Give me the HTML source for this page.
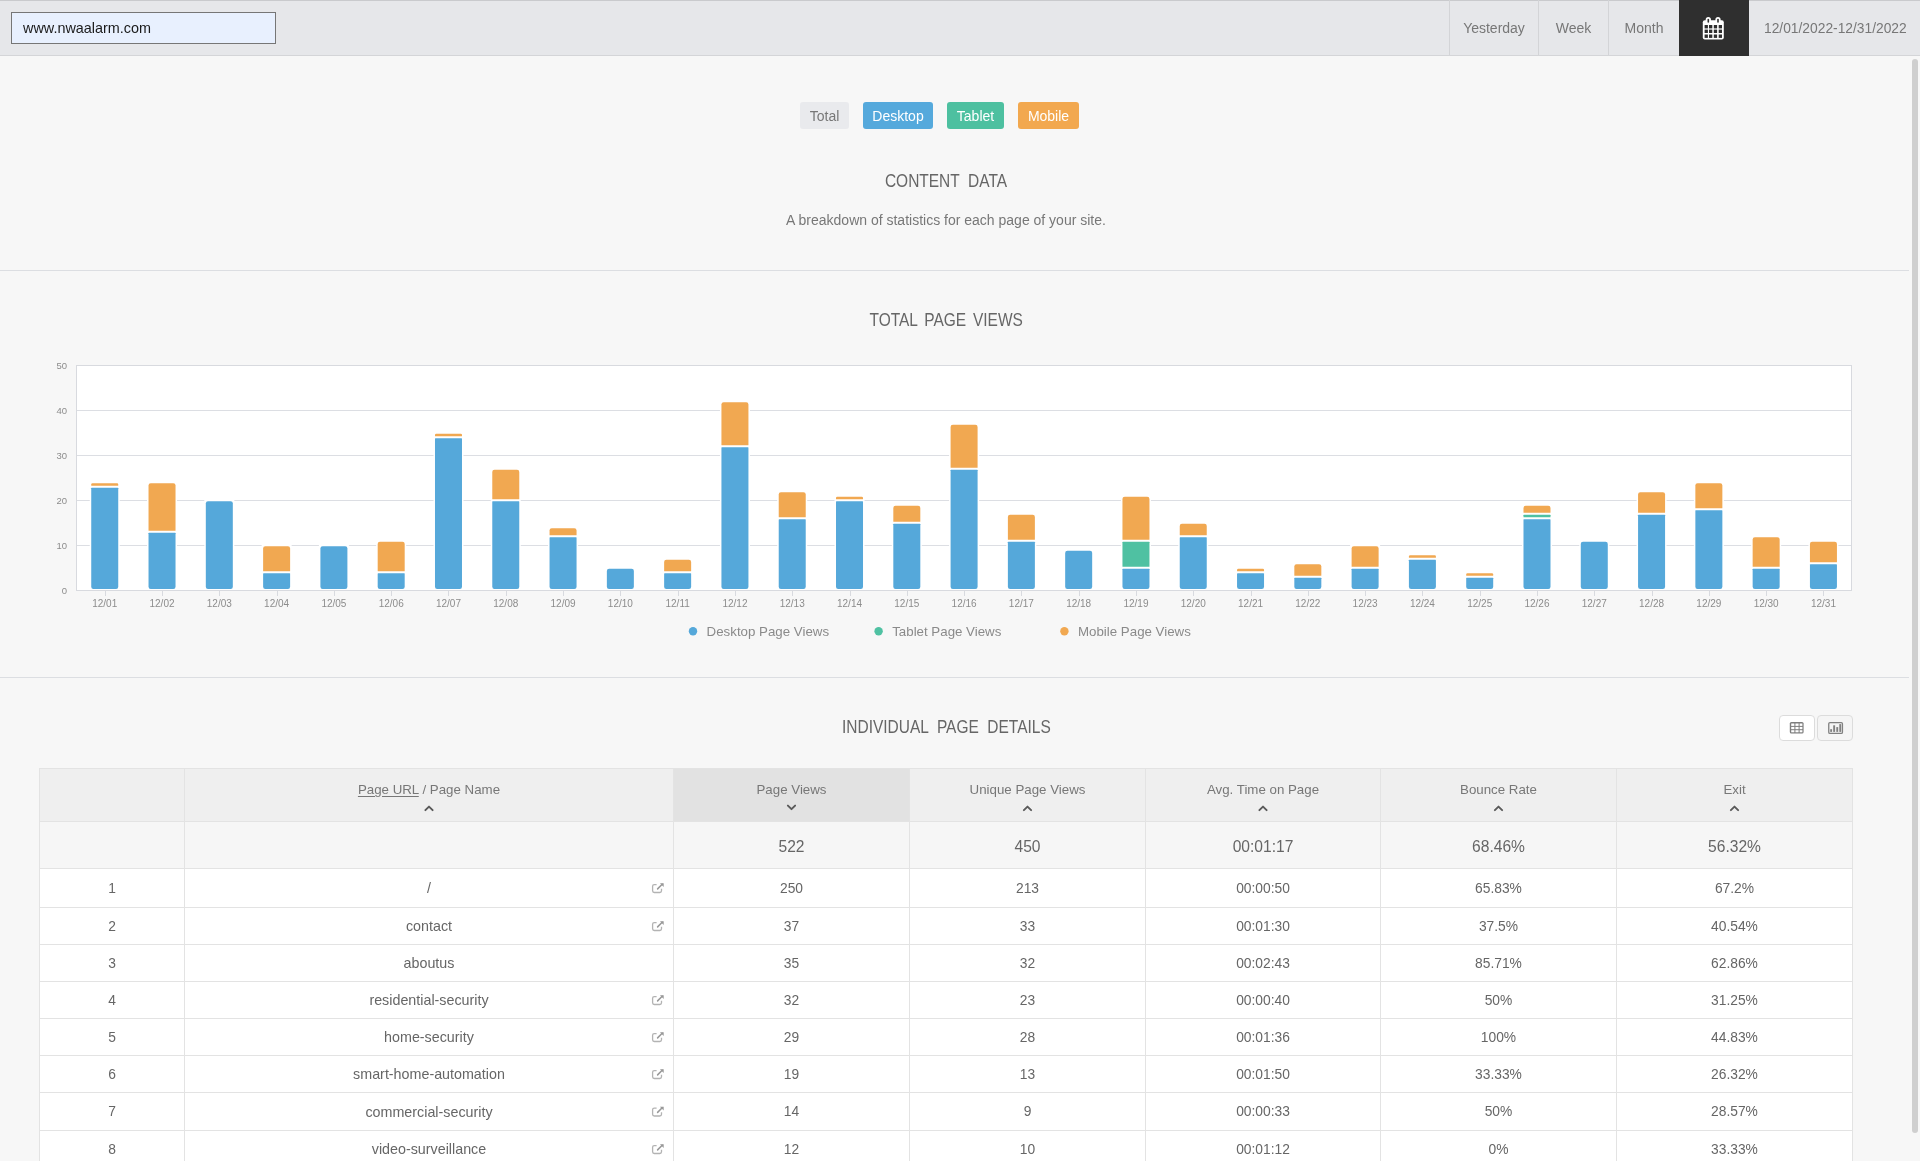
<!DOCTYPE html>
<html><head><meta charset="utf-8">
<style>
*{box-sizing:border-box;margin:0;padding:0}
html,body{width:1920px;height:1161px;overflow:hidden}
body{background:#f7f7f7;font-family:"Liberation Sans",sans-serif;color:#777;position:relative}
.abs{position:absolute;will-change:transform}
svg text{font-family:"Liberation Sans",sans-serif}
#hdr{left:0;top:0;width:1920px;height:56px;background:#e6e7ea;border-top:1px solid #c9cacd;border-bottom:1px solid #d4d5d8}
#url{left:11px;top:12px;width:265px;height:32px;border:1px solid #767676;background:#e8f0fe;color:#1a1a1a;font-size:14.4px;line-height:31px;padding-left:11px}
.nav{top:1px;height:55px;line-height:55px;font-size:14px;color:#777;text-align:center}
.sep{top:0;width:1px;height:55px;background:#d3d4d7}
#cal{left:1679px;top:0;width:70px;height:56px;background:#2f2f2f}
.btn{top:102px;height:27px;border-radius:3px;font-size:14px;line-height:29px;text-align:center;color:#fff}
.h2{left:0;width:1892px;text-align:center;font-size:18px;line-height:20px;color:#666}
.h2 span{display:inline-block;transform:scaleX(0.86);word-spacing:5px}
.hr{left:0;width:1909px;height:1px;background:#dcdee2}
#scroll{left:1912px;top:59px;width:6px;height:1074px;border-radius:3px;background:#cfcfcf}
.th{top:780px;height:20px;line-height:20px;text-align:center;font-size:13.3px;color:#777}
.th u{text-decoration:underline;text-underline-offset:2px}
.tt{top:824px;height:46px;line-height:46px;text-align:center;font-size:15.6px;color:#666}
.td{text-align:center;font-size:13.8px;color:#666}
.iconbtn{top:715px;width:36px;height:26px;border:1px solid #dcdcdc;border-radius:4px}
</style></head><body>
<div id="hdr" class="abs"></div>
<div id="url" class="abs">www.nwaalarm.com</div>
<div class="abs sep" style="left:1449px"></div>
<div class="abs sep" style="left:1538px"></div>
<div class="abs sep" style="left:1608px"></div>
<div class="abs nav" style="left:1450px;width:88px">Yesterday</div>
<div class="abs nav" style="left:1539px;width:69px">Week</div>
<div class="abs nav" style="left:1609px;width:70px">Month</div>
<div id="cal" class="abs"></div>
<svg class="abs" style="left:1679px;top:0" width="70" height="56" viewBox="1679 0 70 56">
<rect x="1702.8" y="20.3" width="21" height="19.3" rx="2" fill="#fff"/>
<rect x="1705.7" y="17" width="5.2" height="6.5" rx="2.6" fill="#fff"/>
<rect x="1707.5" y="18.8" width="1.6" height="4" rx="0.8" fill="#2f2f2f"/>
<rect x="1715.4" y="17" width="5.2" height="6.5" rx="2.6" fill="#fff"/>
<rect x="1717.2" y="18.8" width="1.6" height="4" rx="0.8" fill="#2f2f2f"/>
<rect x="1704.6" y="25.0" width="3.3" height="3.4" fill="#2f2f2f"/>
<rect x="1704.6" y="29.6" width="3.3" height="3.4" fill="#2f2f2f"/>
<rect x="1704.6" y="34.5" width="3.3" height="3.4" fill="#2f2f2f"/>
<rect x="1709.0" y="25.0" width="3.3" height="3.4" fill="#2f2f2f"/>
<rect x="1709.0" y="29.6" width="3.3" height="3.4" fill="#2f2f2f"/>
<rect x="1709.0" y="34.5" width="3.3" height="3.4" fill="#2f2f2f"/>
<rect x="1713.8" y="25.0" width="3.3" height="3.4" fill="#2f2f2f"/>
<rect x="1713.8" y="29.6" width="3.3" height="3.4" fill="#2f2f2f"/>
<rect x="1713.8" y="34.5" width="3.3" height="3.4" fill="#2f2f2f"/>
<rect x="1718.7" y="25.0" width="3.3" height="3.4" fill="#2f2f2f"/>
<rect x="1718.7" y="29.6" width="3.3" height="3.4" fill="#2f2f2f"/>
<rect x="1718.7" y="34.5" width="3.3" height="3.4" fill="#2f2f2f"/>
</svg>
<div class="abs nav" style="left:1764px;width:160px;text-align:left;font-size:13.8px">12/01/2022-12/31/2022</div>

<div class="abs btn" style="left:800px;width:49px;background:#e9eaed;color:#777">Total</div>
<div class="abs btn" style="left:863px;width:70px;background:#55a9dc">Desktop</div>
<div class="abs btn" style="left:947px;width:57px;background:#4dc0a0">Tablet</div>
<div class="abs btn" style="left:1018px;width:61px;background:#f2a84f">Mobile</div>

<div class="abs h2" style="top:171px"><span>CONTENT DATA</span></div>
<div class="abs" style="left:0;width:1892px;top:212px;text-align:center;font-size:14px;color:#777">A breakdown of statistics for each page of your site.</div>
<div class="abs hr" style="top:270px"></div>
<div class="abs h2" style="top:310px"><span style="word-spacing:3px">TOTAL PAGE VIEWS</span></div>
<svg class="abs" style="left:0;top:340px;will-change:transform" width="1908" height="320" viewBox="0 340 1908 320">
<rect x="76.5" y="365.5" width="1775" height="225" fill="#fff" stroke="#d8dadf" stroke-width="1"/>
<line x1="77" x2="1851" y1="545.5" y2="545.5" stroke="#dcdee3" stroke-width="1"/>
<line x1="77" x2="1851" y1="500.5" y2="500.5" stroke="#dcdee3" stroke-width="1"/>
<line x1="77" x2="1851" y1="455.5" y2="455.5" stroke="#dcdee3" stroke-width="1"/>
<line x1="77" x2="1851" y1="410.5" y2="410.5" stroke="#dcdee3" stroke-width="1"/>
<text x="67" y="593.8" text-anchor="end" font-size="9.5" fill="#8c8c8c">0</text>
<text x="67" y="548.8" text-anchor="end" font-size="9.5" fill="#8c8c8c">10</text>
<text x="67" y="503.8" text-anchor="end" font-size="9.5" fill="#8c8c8c">20</text>
<text x="67" y="458.8" text-anchor="end" font-size="9.5" fill="#8c8c8c">30</text>
<text x="67" y="413.8" text-anchor="end" font-size="9.5" fill="#8c8c8c">40</text>
<text x="67" y="368.8" text-anchor="end" font-size="9.5" fill="#8c8c8c">50</text>
<rect x="89.74" y="481.80" width="30" height="107.70" fill="#fff"/>
<path d="M91.64 487.80 H117.84 Q118.24 487.80 118.24 488.20 V586.80 Q118.24 589.00 116.04 589.00 H93.44 Q91.24 589.00 91.24 586.80 V488.20 Q91.24 487.80 91.64 487.80 Z" fill="#55a8da"/>
<path d="M92.49 483.30 H116.99 Q118.24 483.30 118.24 484.55 V485.40 Q118.24 485.80 117.84 485.80 H91.64 Q91.24 485.80 91.24 485.40 V484.55 Q91.24 483.30 92.49 483.30 Z" fill="#f1a851"/>
<line x1="105.5" x2="105.5" y1="591" y2="596" stroke="#d8dadf" stroke-width="1"/>
<text x="104.74" y="607.0" text-anchor="middle" font-size="10" fill="#8c8c8c">12/01</text>
<rect x="147.03" y="481.80" width="30" height="107.70" fill="#fff"/>
<path d="M148.94 532.80 H175.13 Q175.53 532.80 175.53 533.20 V586.80 Q175.53 589.00 173.34 589.00 H150.73 Q148.53 589.00 148.53 586.80 V533.20 Q148.53 532.80 148.94 532.80 Z" fill="#55a8da"/>
<path d="M150.73 483.30 H173.34 Q175.53 483.30 175.53 485.50 V530.40 Q175.53 530.80 175.13 530.80 H148.94 Q148.53 530.80 148.53 530.40 V485.50 Q148.53 483.30 150.73 483.30 Z" fill="#f1a851"/>
<line x1="162.5" x2="162.5" y1="591" y2="596" stroke="#d8dadf" stroke-width="1"/>
<text x="162.03" y="607.0" text-anchor="middle" font-size="10" fill="#8c8c8c">12/02</text>
<rect x="204.32" y="499.80" width="30" height="89.70" fill="#fff"/>
<path d="M208.02 501.30 H230.62 Q232.82 501.30 232.82 503.50 V586.80 Q232.82 589.00 230.62 589.00 H208.02 Q205.82 589.00 205.82 586.80 V503.50 Q205.82 501.30 208.02 501.30 Z" fill="#55a8da"/>
<line x1="219.5" x2="219.5" y1="591" y2="596" stroke="#d8dadf" stroke-width="1"/>
<text x="219.32" y="607.0" text-anchor="middle" font-size="10" fill="#8c8c8c">12/03</text>
<rect x="261.62" y="544.80" width="30" height="44.70" fill="#fff"/>
<path d="M263.51 573.30 H289.72 Q290.12 573.30 290.12 573.70 V586.80 Q290.12 589.00 287.92 589.00 H265.31 Q263.12 589.00 263.12 586.80 V573.70 Q263.12 573.30 263.51 573.30 Z" fill="#55a8da"/>
<path d="M265.31 546.30 H287.92 Q290.12 546.30 290.12 548.50 V570.90 Q290.12 571.30 289.72 571.30 H263.51 Q263.12 571.30 263.12 570.90 V548.50 Q263.12 546.30 265.31 546.30 Z" fill="#f1a851"/>
<line x1="277.5" x2="277.5" y1="591" y2="596" stroke="#d8dadf" stroke-width="1"/>
<text x="276.62" y="607.0" text-anchor="middle" font-size="10" fill="#8c8c8c">12/04</text>
<rect x="318.90" y="544.80" width="30" height="44.70" fill="#fff"/>
<path d="M322.60 546.30 H345.20 Q347.40 546.30 347.40 548.50 V586.80 Q347.40 589.00 345.20 589.00 H322.60 Q320.40 589.00 320.40 586.80 V548.50 Q320.40 546.30 322.60 546.30 Z" fill="#55a8da"/>
<line x1="334.5" x2="334.5" y1="591" y2="596" stroke="#d8dadf" stroke-width="1"/>
<text x="333.90" y="607.0" text-anchor="middle" font-size="10" fill="#8c8c8c">12/05</text>
<rect x="376.19" y="540.30" width="30" height="49.20" fill="#fff"/>
<path d="M378.09 573.30 H404.29 Q404.69 573.30 404.69 573.70 V586.80 Q404.69 589.00 402.49 589.00 H379.89 Q377.69 589.00 377.69 586.80 V573.70 Q377.69 573.30 378.09 573.30 Z" fill="#55a8da"/>
<path d="M379.89 541.80 H402.49 Q404.69 541.80 404.69 544.00 V570.90 Q404.69 571.30 404.29 571.30 H378.09 Q377.69 571.30 377.69 570.90 V544.00 Q377.69 541.80 379.89 541.80 Z" fill="#f1a851"/>
<line x1="391.5" x2="391.5" y1="591" y2="596" stroke="#d8dadf" stroke-width="1"/>
<text x="391.19" y="607.0" text-anchor="middle" font-size="10" fill="#8c8c8c">12/06</text>
<rect x="433.49" y="432.30" width="30" height="157.20" fill="#fff"/>
<path d="M435.38 438.30 H461.59 Q461.99 438.30 461.99 438.70 V586.80 Q461.99 589.00 459.79 589.00 H437.19 Q434.99 589.00 434.99 586.80 V438.70 Q434.99 438.30 435.38 438.30 Z" fill="#55a8da"/>
<path d="M436.24 433.80 H460.74 Q461.99 433.80 461.99 435.05 V435.90 Q461.99 436.30 461.59 436.30 H435.38 Q434.99 436.30 434.99 435.90 V435.05 Q434.99 433.80 436.24 433.80 Z" fill="#f1a851"/>
<line x1="448.5" x2="448.5" y1="591" y2="596" stroke="#d8dadf" stroke-width="1"/>
<text x="448.49" y="607.0" text-anchor="middle" font-size="10" fill="#8c8c8c">12/07</text>
<rect x="490.77" y="468.30" width="30" height="121.20" fill="#fff"/>
<path d="M492.67 501.30 H518.88 Q519.27 501.30 519.27 501.70 V586.80 Q519.27 589.00 517.07 589.00 H494.47 Q492.27 589.00 492.27 586.80 V501.70 Q492.27 501.30 492.67 501.30 Z" fill="#55a8da"/>
<path d="M494.47 469.80 H517.07 Q519.27 469.80 519.27 472.00 V498.90 Q519.27 499.30 518.88 499.30 H492.67 Q492.27 499.30 492.27 498.90 V472.00 Q492.27 469.80 494.47 469.80 Z" fill="#f1a851"/>
<line x1="506.5" x2="506.5" y1="591" y2="596" stroke="#d8dadf" stroke-width="1"/>
<text x="505.77" y="607.0" text-anchor="middle" font-size="10" fill="#8c8c8c">12/08</text>
<rect x="548.06" y="526.80" width="30" height="62.70" fill="#fff"/>
<path d="M549.96 537.30 H576.16 Q576.56 537.30 576.56 537.70 V586.80 Q576.56 589.00 574.36 589.00 H551.76 Q549.56 589.00 549.56 586.80 V537.70 Q549.56 537.30 549.96 537.30 Z" fill="#55a8da"/>
<path d="M551.76 528.30 H574.36 Q576.56 528.30 576.56 530.50 V534.90 Q576.56 535.30 576.16 535.30 H549.96 Q549.56 535.30 549.56 534.90 V530.50 Q549.56 528.30 551.76 528.30 Z" fill="#f1a851"/>
<line x1="563.5" x2="563.5" y1="591" y2="596" stroke="#d8dadf" stroke-width="1"/>
<text x="563.06" y="607.0" text-anchor="middle" font-size="10" fill="#8c8c8c">12/09</text>
<rect x="605.36" y="567.30" width="30" height="22.20" fill="#fff"/>
<path d="M609.06 568.80 H631.65 Q633.86 568.80 633.86 571.00 V586.80 Q633.86 589.00 631.65 589.00 H609.06 Q606.86 589.00 606.86 586.80 V571.00 Q606.86 568.80 609.06 568.80 Z" fill="#55a8da"/>
<line x1="620.5" x2="620.5" y1="591" y2="596" stroke="#d8dadf" stroke-width="1"/>
<text x="620.36" y="607.0" text-anchor="middle" font-size="10" fill="#8c8c8c">12/10</text>
<rect x="662.64" y="558.30" width="30" height="31.20" fill="#fff"/>
<path d="M664.54 573.30 H690.75 Q691.14 573.30 691.14 573.70 V586.80 Q691.14 589.00 688.94 589.00 H666.35 Q664.14 589.00 664.14 586.80 V573.70 Q664.14 573.30 664.54 573.30 Z" fill="#55a8da"/>
<path d="M666.35 559.80 H688.94 Q691.14 559.80 691.14 562.00 V570.90 Q691.14 571.30 690.75 571.30 H664.54 Q664.14 571.30 664.14 570.90 V562.00 Q664.14 559.80 666.35 559.80 Z" fill="#f1a851"/>
<line x1="678.5" x2="678.5" y1="591" y2="596" stroke="#d8dadf" stroke-width="1"/>
<text x="677.64" y="607.0" text-anchor="middle" font-size="10" fill="#8c8c8c">12/11</text>
<rect x="719.94" y="400.80" width="30" height="188.70" fill="#fff"/>
<path d="M721.84 447.30 H748.04 Q748.44 447.30 748.44 447.70 V586.80 Q748.44 589.00 746.24 589.00 H723.64 Q721.44 589.00 721.44 586.80 V447.70 Q721.44 447.30 721.84 447.30 Z" fill="#55a8da"/>
<path d="M723.64 402.30 H746.24 Q748.44 402.30 748.44 404.50 V444.90 Q748.44 445.30 748.04 445.30 H721.84 Q721.44 445.30 721.44 444.90 V404.50 Q721.44 402.30 723.64 402.30 Z" fill="#f1a851"/>
<line x1="735.5" x2="735.5" y1="591" y2="596" stroke="#d8dadf" stroke-width="1"/>
<text x="734.94" y="607.0" text-anchor="middle" font-size="10" fill="#8c8c8c">12/12</text>
<rect x="777.23" y="490.80" width="30" height="98.70" fill="#fff"/>
<path d="M779.12 519.30 H805.33 Q805.73 519.30 805.73 519.70 V586.80 Q805.73 589.00 803.52 589.00 H780.93 Q778.73 589.00 778.73 586.80 V519.70 Q778.73 519.30 779.12 519.30 Z" fill="#55a8da"/>
<path d="M780.93 492.30 H803.52 Q805.73 492.30 805.73 494.50 V516.90 Q805.73 517.30 805.33 517.30 H779.12 Q778.73 517.30 778.73 516.90 V494.50 Q778.73 492.30 780.93 492.30 Z" fill="#f1a851"/>
<line x1="792.5" x2="792.5" y1="591" y2="596" stroke="#d8dadf" stroke-width="1"/>
<text x="792.23" y="607.0" text-anchor="middle" font-size="10" fill="#8c8c8c">12/13</text>
<rect x="834.51" y="495.30" width="30" height="94.20" fill="#fff"/>
<path d="M836.41 501.30 H862.62 Q863.01 501.30 863.01 501.70 V586.80 Q863.01 589.00 860.81 589.00 H838.22 Q836.01 589.00 836.01 586.80 V501.70 Q836.01 501.30 836.41 501.30 Z" fill="#55a8da"/>
<path d="M837.26 496.80 H861.76 Q863.01 496.80 863.01 498.05 V498.90 Q863.01 499.30 862.62 499.30 H836.41 Q836.01 499.30 836.01 498.90 V498.05 Q836.01 496.80 837.26 496.80 Z" fill="#f1a851"/>
<line x1="850.5" x2="850.5" y1="591" y2="596" stroke="#d8dadf" stroke-width="1"/>
<text x="849.51" y="607.0" text-anchor="middle" font-size="10" fill="#8c8c8c">12/14</text>
<rect x="891.81" y="504.30" width="30" height="85.20" fill="#fff"/>
<path d="M893.71 523.80 H919.91 Q920.31 523.80 920.31 524.20 V586.80 Q920.31 589.00 918.11 589.00 H895.51 Q893.31 589.00 893.31 586.80 V524.20 Q893.31 523.80 893.71 523.80 Z" fill="#55a8da"/>
<path d="M895.51 505.80 H918.11 Q920.31 505.80 920.31 508.00 V521.40 Q920.31 521.80 919.91 521.80 H893.71 Q893.31 521.80 893.31 521.40 V508.00 Q893.31 505.80 895.51 505.80 Z" fill="#f1a851"/>
<line x1="907.5" x2="907.5" y1="591" y2="596" stroke="#d8dadf" stroke-width="1"/>
<text x="906.81" y="607.0" text-anchor="middle" font-size="10" fill="#8c8c8c">12/15</text>
<rect x="949.10" y="423.30" width="30" height="166.20" fill="#fff"/>
<path d="M951.00 469.80 H977.20 Q977.60 469.80 977.60 470.20 V586.80 Q977.60 589.00 975.39 589.00 H952.80 Q950.60 589.00 950.60 586.80 V470.20 Q950.60 469.80 951.00 469.80 Z" fill="#55a8da"/>
<path d="M952.80 424.80 H975.39 Q977.60 424.80 977.60 427.00 V467.40 Q977.60 467.80 977.20 467.80 H951.00 Q950.60 467.80 950.60 467.40 V427.00 Q950.60 424.80 952.80 424.80 Z" fill="#f1a851"/>
<line x1="964.5" x2="964.5" y1="591" y2="596" stroke="#d8dadf" stroke-width="1"/>
<text x="964.10" y="607.0" text-anchor="middle" font-size="10" fill="#8c8c8c">12/16</text>
<rect x="1006.38" y="513.30" width="30" height="76.20" fill="#fff"/>
<path d="M1008.28 541.80 H1034.48 Q1034.88 541.80 1034.88 542.20 V586.80 Q1034.88 589.00 1032.68 589.00 H1010.09 Q1007.88 589.00 1007.88 586.80 V542.20 Q1007.88 541.80 1008.28 541.80 Z" fill="#55a8da"/>
<path d="M1010.09 514.80 H1032.68 Q1034.88 514.80 1034.88 517.00 V539.40 Q1034.88 539.80 1034.48 539.80 H1008.28 Q1007.88 539.80 1007.88 539.40 V517.00 Q1007.88 514.80 1010.09 514.80 Z" fill="#f1a851"/>
<line x1="1021.5" x2="1021.5" y1="591" y2="596" stroke="#d8dadf" stroke-width="1"/>
<text x="1021.38" y="607.0" text-anchor="middle" font-size="10" fill="#8c8c8c">12/17</text>
<rect x="1063.67" y="549.30" width="30" height="40.20" fill="#fff"/>
<path d="M1067.38 550.80 H1089.97 Q1092.17 550.80 1092.17 553.00 V586.80 Q1092.17 589.00 1089.97 589.00 H1067.38 Q1065.17 589.00 1065.17 586.80 V553.00 Q1065.17 550.80 1067.38 550.80 Z" fill="#55a8da"/>
<line x1="1079.5" x2="1079.5" y1="591" y2="596" stroke="#d8dadf" stroke-width="1"/>
<text x="1078.67" y="607.0" text-anchor="middle" font-size="10" fill="#8c8c8c">12/18</text>
<rect x="1120.96" y="495.30" width="30" height="94.20" fill="#fff"/>
<path d="M1122.87 568.80 H1149.06 Q1149.46 568.80 1149.46 569.20 V586.80 Q1149.46 589.00 1147.26 589.00 H1124.66 Q1122.46 589.00 1122.46 586.80 V569.20 Q1122.46 568.80 1122.87 568.80 Z" fill="#55a8da"/>
<path d="M1122.87 541.80 H1149.06 Q1149.46 541.80 1149.46 542.20 V566.40 Q1149.46 566.80 1149.06 566.80 H1122.87 Q1122.46 566.80 1122.46 566.40 V542.20 Q1122.46 541.80 1122.87 541.80 Z" fill="#4fc1a2"/>
<path d="M1124.66 496.80 H1147.26 Q1149.46 496.80 1149.46 499.00 V539.40 Q1149.46 539.80 1149.06 539.80 H1122.87 Q1122.46 539.80 1122.46 539.40 V499.00 Q1122.46 496.80 1124.66 496.80 Z" fill="#f1a851"/>
<line x1="1136.5" x2="1136.5" y1="591" y2="596" stroke="#d8dadf" stroke-width="1"/>
<text x="1135.96" y="607.0" text-anchor="middle" font-size="10" fill="#8c8c8c">12/19</text>
<rect x="1178.25" y="522.30" width="30" height="67.20" fill="#fff"/>
<path d="M1180.15 537.30 H1206.35 Q1206.75 537.30 1206.75 537.70 V586.80 Q1206.75 589.00 1204.55 589.00 H1181.95 Q1179.75 589.00 1179.75 586.80 V537.70 Q1179.75 537.30 1180.15 537.30 Z" fill="#55a8da"/>
<path d="M1181.95 523.80 H1204.55 Q1206.75 523.80 1206.75 526.00 V534.90 Q1206.75 535.30 1206.35 535.30 H1180.15 Q1179.75 535.30 1179.75 534.90 V526.00 Q1179.75 523.80 1181.95 523.80 Z" fill="#f1a851"/>
<line x1="1193.5" x2="1193.5" y1="591" y2="596" stroke="#d8dadf" stroke-width="1"/>
<text x="1193.25" y="607.0" text-anchor="middle" font-size="10" fill="#8c8c8c">12/20</text>
<rect x="1235.54" y="567.30" width="30" height="22.20" fill="#fff"/>
<path d="M1237.44 573.30 H1263.64 Q1264.04 573.30 1264.04 573.70 V586.80 Q1264.04 589.00 1261.84 589.00 H1239.24 Q1237.04 589.00 1237.04 586.80 V573.70 Q1237.04 573.30 1237.44 573.30 Z" fill="#55a8da"/>
<path d="M1238.29 568.80 H1262.79 Q1264.04 568.80 1264.04 570.05 V570.90 Q1264.04 571.30 1263.64 571.30 H1237.44 Q1237.04 571.30 1237.04 570.90 V570.05 Q1237.04 568.80 1238.29 568.80 Z" fill="#f1a851"/>
<line x1="1251.5" x2="1251.5" y1="591" y2="596" stroke="#d8dadf" stroke-width="1"/>
<text x="1250.54" y="607.0" text-anchor="middle" font-size="10" fill="#8c8c8c">12/21</text>
<rect x="1292.83" y="562.80" width="30" height="26.70" fill="#fff"/>
<path d="M1294.73 577.80 H1320.93 Q1321.33 577.80 1321.33 578.20 V586.80 Q1321.33 589.00 1319.13 589.00 H1296.53 Q1294.33 589.00 1294.33 586.80 V578.20 Q1294.33 577.80 1294.73 577.80 Z" fill="#55a8da"/>
<path d="M1296.53 564.30 H1319.13 Q1321.33 564.30 1321.33 566.50 V575.40 Q1321.33 575.80 1320.93 575.80 H1294.73 Q1294.33 575.80 1294.33 575.40 V566.50 Q1294.33 564.30 1296.53 564.30 Z" fill="#f1a851"/>
<line x1="1308.5" x2="1308.5" y1="591" y2="596" stroke="#d8dadf" stroke-width="1"/>
<text x="1307.83" y="607.0" text-anchor="middle" font-size="10" fill="#8c8c8c">12/22</text>
<rect x="1350.12" y="544.80" width="30" height="44.70" fill="#fff"/>
<path d="M1352.03 568.80 H1378.22 Q1378.62 568.80 1378.62 569.20 V586.80 Q1378.62 589.00 1376.42 589.00 H1353.83 Q1351.62 589.00 1351.62 586.80 V569.20 Q1351.62 568.80 1352.03 568.80 Z" fill="#55a8da"/>
<path d="M1353.83 546.30 H1376.42 Q1378.62 546.30 1378.62 548.50 V566.40 Q1378.62 566.80 1378.22 566.80 H1352.03 Q1351.62 566.80 1351.62 566.40 V548.50 Q1351.62 546.30 1353.83 546.30 Z" fill="#f1a851"/>
<line x1="1365.5" x2="1365.5" y1="591" y2="596" stroke="#d8dadf" stroke-width="1"/>
<text x="1365.12" y="607.0" text-anchor="middle" font-size="10" fill="#8c8c8c">12/23</text>
<rect x="1407.41" y="553.80" width="30" height="35.70" fill="#fff"/>
<path d="M1409.32 559.80 H1435.51 Q1435.91 559.80 1435.91 560.20 V586.80 Q1435.91 589.00 1433.71 589.00 H1411.12 Q1408.91 589.00 1408.91 586.80 V560.20 Q1408.91 559.80 1409.32 559.80 Z" fill="#55a8da"/>
<path d="M1410.16 555.30 H1434.66 Q1435.91 555.30 1435.91 556.55 V557.40 Q1435.91 557.80 1435.51 557.80 H1409.32 Q1408.91 557.80 1408.91 557.40 V556.55 Q1408.91 555.30 1410.16 555.30 Z" fill="#f1a851"/>
<line x1="1422.5" x2="1422.5" y1="591" y2="596" stroke="#d8dadf" stroke-width="1"/>
<text x="1422.41" y="607.0" text-anchor="middle" font-size="10" fill="#8c8c8c">12/24</text>
<rect x="1464.70" y="571.80" width="30" height="17.70" fill="#fff"/>
<path d="M1466.61 577.80 H1492.80 Q1493.20 577.80 1493.20 578.20 V586.80 Q1493.20 589.00 1491.00 589.00 H1468.40 Q1466.20 589.00 1466.20 586.80 V578.20 Q1466.20 577.80 1466.61 577.80 Z" fill="#55a8da"/>
<path d="M1467.45 573.30 H1491.95 Q1493.20 573.30 1493.20 574.55 V575.40 Q1493.20 575.80 1492.80 575.80 H1466.61 Q1466.20 575.80 1466.20 575.40 V574.55 Q1466.20 573.30 1467.45 573.30 Z" fill="#f1a851"/>
<line x1="1480.5" x2="1480.5" y1="591" y2="596" stroke="#d8dadf" stroke-width="1"/>
<text x="1479.70" y="607.0" text-anchor="middle" font-size="10" fill="#8c8c8c">12/25</text>
<rect x="1521.99" y="504.30" width="30" height="85.20" fill="#fff"/>
<path d="M1523.89 519.30 H1550.09 Q1550.49 519.30 1550.49 519.70 V586.80 Q1550.49 589.00 1548.29 589.00 H1525.69 Q1523.49 589.00 1523.49 586.80 V519.70 Q1523.49 519.30 1523.89 519.30 Z" fill="#55a8da"/>
<path d="M1523.89 514.80 H1550.09 Q1550.49 514.80 1550.49 515.20 V516.90 Q1550.49 517.30 1550.09 517.30 H1523.89 Q1523.49 517.30 1523.49 516.90 V515.20 Q1523.49 514.80 1523.89 514.80 Z" fill="#4fc1a2"/>
<path d="M1525.69 505.80 H1548.29 Q1550.49 505.80 1550.49 508.00 V512.40 Q1550.49 512.80 1550.09 512.80 H1523.89 Q1523.49 512.80 1523.49 512.40 V508.00 Q1523.49 505.80 1525.69 505.80 Z" fill="#f1a851"/>
<line x1="1537.5" x2="1537.5" y1="591" y2="596" stroke="#d8dadf" stroke-width="1"/>
<text x="1536.99" y="607.0" text-anchor="middle" font-size="10" fill="#8c8c8c">12/26</text>
<rect x="1579.28" y="540.30" width="30" height="49.20" fill="#fff"/>
<path d="M1582.98 541.80 H1605.58 Q1607.78 541.80 1607.78 544.00 V586.80 Q1607.78 589.00 1605.58 589.00 H1582.98 Q1580.78 589.00 1580.78 586.80 V544.00 Q1580.78 541.80 1582.98 541.80 Z" fill="#55a8da"/>
<line x1="1594.5" x2="1594.5" y1="591" y2="596" stroke="#d8dadf" stroke-width="1"/>
<text x="1594.28" y="607.0" text-anchor="middle" font-size="10" fill="#8c8c8c">12/27</text>
<rect x="1636.57" y="490.80" width="30" height="98.70" fill="#fff"/>
<path d="M1638.47 514.80 H1664.67 Q1665.07 514.80 1665.07 515.20 V586.80 Q1665.07 589.00 1662.87 589.00 H1640.27 Q1638.07 589.00 1638.07 586.80 V515.20 Q1638.07 514.80 1638.47 514.80 Z" fill="#55a8da"/>
<path d="M1640.27 492.30 H1662.87 Q1665.07 492.30 1665.07 494.50 V512.40 Q1665.07 512.80 1664.67 512.80 H1638.47 Q1638.07 512.80 1638.07 512.40 V494.50 Q1638.07 492.30 1640.27 492.30 Z" fill="#f1a851"/>
<line x1="1652.5" x2="1652.5" y1="591" y2="596" stroke="#d8dadf" stroke-width="1"/>
<text x="1651.57" y="607.0" text-anchor="middle" font-size="10" fill="#8c8c8c">12/28</text>
<rect x="1693.86" y="481.80" width="30" height="107.70" fill="#fff"/>
<path d="M1695.76 510.30 H1721.96 Q1722.36 510.30 1722.36 510.70 V586.80 Q1722.36 589.00 1720.16 589.00 H1697.56 Q1695.36 589.00 1695.36 586.80 V510.70 Q1695.36 510.30 1695.76 510.30 Z" fill="#55a8da"/>
<path d="M1697.56 483.30 H1720.16 Q1722.36 483.30 1722.36 485.50 V507.90 Q1722.36 508.30 1721.96 508.30 H1695.76 Q1695.36 508.30 1695.36 507.90 V485.50 Q1695.36 483.30 1697.56 483.30 Z" fill="#f1a851"/>
<line x1="1709.5" x2="1709.5" y1="591" y2="596" stroke="#d8dadf" stroke-width="1"/>
<text x="1708.86" y="607.0" text-anchor="middle" font-size="10" fill="#8c8c8c">12/29</text>
<rect x="1751.15" y="535.80" width="30" height="53.70" fill="#fff"/>
<path d="M1753.06 568.80 H1779.25 Q1779.65 568.80 1779.65 569.20 V586.80 Q1779.65 589.00 1777.45 589.00 H1754.86 Q1752.65 589.00 1752.65 586.80 V569.20 Q1752.65 568.80 1753.06 568.80 Z" fill="#55a8da"/>
<path d="M1754.86 537.30 H1777.45 Q1779.65 537.30 1779.65 539.50 V566.40 Q1779.65 566.80 1779.25 566.80 H1753.06 Q1752.65 566.80 1752.65 566.40 V539.50 Q1752.65 537.30 1754.86 537.30 Z" fill="#f1a851"/>
<line x1="1766.5" x2="1766.5" y1="591" y2="596" stroke="#d8dadf" stroke-width="1"/>
<text x="1766.15" y="607.0" text-anchor="middle" font-size="10" fill="#8c8c8c">12/30</text>
<rect x="1808.44" y="540.30" width="30" height="49.20" fill="#fff"/>
<path d="M1810.35 564.30 H1836.54 Q1836.94 564.30 1836.94 564.70 V586.80 Q1836.94 589.00 1834.74 589.00 H1812.14 Q1809.94 589.00 1809.94 586.80 V564.70 Q1809.94 564.30 1810.35 564.30 Z" fill="#55a8da"/>
<path d="M1812.14 541.80 H1834.74 Q1836.94 541.80 1836.94 544.00 V561.90 Q1836.94 562.30 1836.54 562.30 H1810.35 Q1809.94 562.30 1809.94 561.90 V544.00 Q1809.94 541.80 1812.14 541.80 Z" fill="#f1a851"/>
<line x1="1823.5" x2="1823.5" y1="591" y2="596" stroke="#d8dadf" stroke-width="1"/>
<text x="1823.44" y="607.0" text-anchor="middle" font-size="10" fill="#8c8c8c">12/31</text>
<circle cx="693" cy="631.3" r="4.2" fill="#55a8da"/>
<text x="706.6" y="636.3" font-size="13.3" fill="#8a8a8a">Desktop Page Views</text>
<circle cx="878.6" cy="631.3" r="4.2" fill="#4fc1a2"/>
<text x="892.2" y="636.3" font-size="13.3" fill="#8a8a8a">Tablet Page Views</text>
<circle cx="1064.4" cy="631.3" r="4.2" fill="#f1a851"/>
<text x="1078.0" y="636.3" font-size="13.3" fill="#8a8a8a">Mobile Page Views</text>
</svg>
<div class="abs hr" style="top:677px"></div>
<div class="abs h2" style="top:717px"><span>INDIVIDUAL PAGE DETAILS</span></div>
<div class="abs iconbtn" style="left:1779px;background:#fff"></div>
<div class="abs iconbtn" style="left:1817px;background:#f5f5f5"></div>
<svg class="abs" style="left:1779px;top:715px" width="76" height="28" viewBox="1779 715 76 28">
<rect x="1789.8" y="721.9" width="13.8" height="11.7" rx="1.6" fill="#7d7d7d"/>
<g fill="#fff"><rect x="1791.2" y="723.5" width="3.2" height="2.4"/><rect x="1795.4" y="723.5" width="3.2" height="2.4"/><rect x="1799.6" y="723.5" width="2.8" height="2.4"/>
<rect x="1791.2" y="726.9" width="3.2" height="2.3"/><rect x="1795.4" y="726.9" width="3.2" height="2.3"/><rect x="1799.6" y="726.9" width="2.8" height="2.3"/>
<rect x="1791.2" y="730.2" width="3.2" height="2.1"/><rect x="1795.4" y="730.2" width="3.2" height="2.1"/><rect x="1799.6" y="730.2" width="2.8" height="2.1"/></g>
<rect x="1828.75" y="722.55" width="13.7" height="10.9" rx="1.2" fill="none" stroke="#808080" stroke-width="1.3"/>
<g fill="#808080"><rect x="1830.2" y="729.2" width="1.9" height="2.7"/><rect x="1833.2" y="725.3" width="1.9" height="6.6"/><rect x="1836.3" y="727.1" width="1.9" height="4.8"/><rect x="1839.3" y="724.1" width="1.9" height="7.8"/></g>
</svg>
<div class="abs" style="left:39px;top:768px;width:1814px;height:54px;background:#efefef"></div>
<div class="abs" style="left:674px;top:769px;width:235px;height:52px;background:#e2e2e2"></div>
<div class="abs" style="left:39px;top:822px;width:1814px;height:46px;background:#f6f6f6"></div>
<div class="abs" style="left:39px;top:869px;width:1814px;height:300px;background:#fff"></div>
<div class="abs" style="left:39px;top:768px;width:1814px;height:1px;background:#e3e3e3"></div>
<div class="abs" style="left:39px;top:821px;width:1814px;height:1px;background:#e3e3e3"></div>
<div class="abs" style="left:39px;top:868px;width:1814px;height:1px;background:#e3e3e3"></div>
<div class="abs" style="left:39px;top:907px;width:1814px;height:1px;background:#e3e3e3"></div>
<div class="abs" style="left:39px;top:944px;width:1814px;height:1px;background:#e3e3e3"></div>
<div class="abs" style="left:39px;top:981px;width:1814px;height:1px;background:#e3e3e3"></div>
<div class="abs" style="left:39px;top:1018px;width:1814px;height:1px;background:#e3e3e3"></div>
<div class="abs" style="left:39px;top:1055px;width:1814px;height:1px;background:#e3e3e3"></div>
<div class="abs" style="left:39px;top:1092px;width:1814px;height:1px;background:#e3e3e3"></div>
<div class="abs" style="left:39px;top:1130px;width:1814px;height:1px;background:#e3e3e3"></div>
<div class="abs" style="left:39px;top:768px;width:1px;height:400px;background:#e3e3e3"></div>
<div class="abs" style="left:184px;top:768px;width:1px;height:400px;background:#e3e3e3"></div>
<div class="abs" style="left:673px;top:768px;width:1px;height:400px;background:#e3e3e3"></div>
<div class="abs" style="left:909px;top:768px;width:1px;height:400px;background:#e3e3e3"></div>
<div class="abs" style="left:1145px;top:768px;width:1px;height:400px;background:#e3e3e3"></div>
<div class="abs" style="left:1380px;top:768px;width:1px;height:400px;background:#e3e3e3"></div>
<div class="abs" style="left:1616px;top:768px;width:1px;height:400px;background:#e3e3e3"></div>
<div class="abs" style="left:1852px;top:768px;width:1px;height:400px;background:#e3e3e3"></div>
<div class="abs th" style="left:185px;width:488px"><u>Page URL</u> / Page Name</div>
<div class="abs th" style="left:674px;width:235px">Page Views</div>
<div class="abs th" style="left:910px;width:235px">Unique Page Views</div>
<div class="abs th" style="left:1146px;width:234px">Avg. Time on Page</div>
<div class="abs th" style="left:1381px;width:235px">Bounce Rate</div>
<div class="abs th" style="left:1617px;width:235px">Exit</div>
<svg class="abs" style="left:0;top:0" width="1908" height="1161"><path d="M425.4 810.2 L429.0 806.6 L432.6 810.2 M787.9 805.6 L791.5 809.2 L795.1 805.6 M1023.9 810.2 L1027.5 806.6 L1031.1 810.2 M1259.4 810.2 L1263.0 806.6 L1266.6 810.2 M1494.9 810.2 L1498.5 806.6 L1502.1 810.2 M1730.9 810.2 L1734.5 806.6 L1738.1 810.2" fill="none" stroke="#5a5a5a" stroke-width="1.9" stroke-linecap="round" stroke-linejoin="round"/></svg>
<div class="abs tt" style="left:674px;width:235px">522</div>
<div class="abs tt" style="left:910px;width:235px">450</div>
<div class="abs tt" style="left:1146px;width:234px">00:01:17</div>
<div class="abs tt" style="left:1381px;width:235px">68.46%</div>
<div class="abs tt" style="left:1617px;width:235px">56.32%</div>
<div class="abs td" style="left:40px;width:144px;top:869px;height:38px;line-height:39px">1</div>
<div class="abs td" style="left:185px;width:488px;top:869px;height:38px;line-height:39px;font-size:14.3px">/</div>
<div class="abs td" style="left:674px;width:235px;top:869px;height:38px;line-height:39px">250</div>
<div class="abs td" style="left:910px;width:235px;top:869px;height:38px;line-height:39px">213</div>
<div class="abs td" style="left:1146px;width:234px;top:869px;height:38px;line-height:39px">00:00:50</div>
<div class="abs td" style="left:1381px;width:235px;top:869px;height:38px;line-height:39px">65.83%</div>
<div class="abs td" style="left:1617px;width:235px;top:869px;height:38px;line-height:39px">67.2%</div>
<div class="abs td" style="left:40px;width:144px;top:908px;height:36px;line-height:37px">2</div>
<div class="abs td" style="left:185px;width:488px;top:908px;height:36px;line-height:37px;font-size:14.3px">contact</div>
<div class="abs td" style="left:674px;width:235px;top:908px;height:36px;line-height:37px">37</div>
<div class="abs td" style="left:910px;width:235px;top:908px;height:36px;line-height:37px">33</div>
<div class="abs td" style="left:1146px;width:234px;top:908px;height:36px;line-height:37px">00:01:30</div>
<div class="abs td" style="left:1381px;width:235px;top:908px;height:36px;line-height:37px">37.5%</div>
<div class="abs td" style="left:1617px;width:235px;top:908px;height:36px;line-height:37px">40.54%</div>
<div class="abs td" style="left:40px;width:144px;top:945px;height:36px;line-height:37px">3</div>
<div class="abs td" style="left:185px;width:488px;top:945px;height:36px;line-height:37px;font-size:14.3px">aboutus</div>
<div class="abs td" style="left:674px;width:235px;top:945px;height:36px;line-height:37px">35</div>
<div class="abs td" style="left:910px;width:235px;top:945px;height:36px;line-height:37px">32</div>
<div class="abs td" style="left:1146px;width:234px;top:945px;height:36px;line-height:37px">00:02:43</div>
<div class="abs td" style="left:1381px;width:235px;top:945px;height:36px;line-height:37px">85.71%</div>
<div class="abs td" style="left:1617px;width:235px;top:945px;height:36px;line-height:37px">62.86%</div>
<div class="abs td" style="left:40px;width:144px;top:982px;height:36px;line-height:37px">4</div>
<div class="abs td" style="left:185px;width:488px;top:982px;height:36px;line-height:37px;font-size:14.3px">residential-security</div>
<div class="abs td" style="left:674px;width:235px;top:982px;height:36px;line-height:37px">32</div>
<div class="abs td" style="left:910px;width:235px;top:982px;height:36px;line-height:37px">23</div>
<div class="abs td" style="left:1146px;width:234px;top:982px;height:36px;line-height:37px">00:00:40</div>
<div class="abs td" style="left:1381px;width:235px;top:982px;height:36px;line-height:37px">50%</div>
<div class="abs td" style="left:1617px;width:235px;top:982px;height:36px;line-height:37px">31.25%</div>
<div class="abs td" style="left:40px;width:144px;top:1019px;height:36px;line-height:37px">5</div>
<div class="abs td" style="left:185px;width:488px;top:1019px;height:36px;line-height:37px;font-size:14.3px">home-security</div>
<div class="abs td" style="left:674px;width:235px;top:1019px;height:36px;line-height:37px">29</div>
<div class="abs td" style="left:910px;width:235px;top:1019px;height:36px;line-height:37px">28</div>
<div class="abs td" style="left:1146px;width:234px;top:1019px;height:36px;line-height:37px">00:01:36</div>
<div class="abs td" style="left:1381px;width:235px;top:1019px;height:36px;line-height:37px">100%</div>
<div class="abs td" style="left:1617px;width:235px;top:1019px;height:36px;line-height:37px">44.83%</div>
<div class="abs td" style="left:40px;width:144px;top:1056px;height:36px;line-height:37px">6</div>
<div class="abs td" style="left:185px;width:488px;top:1056px;height:36px;line-height:37px;font-size:14.3px">smart-home-automation</div>
<div class="abs td" style="left:674px;width:235px;top:1056px;height:36px;line-height:37px">19</div>
<div class="abs td" style="left:910px;width:235px;top:1056px;height:36px;line-height:37px">13</div>
<div class="abs td" style="left:1146px;width:234px;top:1056px;height:36px;line-height:37px">00:01:50</div>
<div class="abs td" style="left:1381px;width:235px;top:1056px;height:36px;line-height:37px">33.33%</div>
<div class="abs td" style="left:1617px;width:235px;top:1056px;height:36px;line-height:37px">26.32%</div>
<div class="abs td" style="left:40px;width:144px;top:1093px;height:37px;line-height:38px">7</div>
<div class="abs td" style="left:185px;width:488px;top:1093px;height:37px;line-height:38px;font-size:14.3px">commercial-security</div>
<div class="abs td" style="left:674px;width:235px;top:1093px;height:37px;line-height:38px">14</div>
<div class="abs td" style="left:910px;width:235px;top:1093px;height:37px;line-height:38px">9</div>
<div class="abs td" style="left:1146px;width:234px;top:1093px;height:37px;line-height:38px">00:00:33</div>
<div class="abs td" style="left:1381px;width:235px;top:1093px;height:37px;line-height:38px">50%</div>
<div class="abs td" style="left:1617px;width:235px;top:1093px;height:37px;line-height:38px">28.57%</div>
<div class="abs td" style="left:40px;width:144px;top:1131px;height:36px;line-height:37px">8</div>
<div class="abs td" style="left:185px;width:488px;top:1131px;height:36px;line-height:37px;font-size:14.3px">video-surveillance</div>
<div class="abs td" style="left:674px;width:235px;top:1131px;height:36px;line-height:37px">12</div>
<div class="abs td" style="left:910px;width:235px;top:1131px;height:36px;line-height:37px">10</div>
<div class="abs td" style="left:1146px;width:234px;top:1131px;height:36px;line-height:37px">00:01:12</div>
<div class="abs td" style="left:1381px;width:235px;top:1131px;height:36px;line-height:37px">0%</div>
<div class="abs td" style="left:1617px;width:235px;top:1131px;height:36px;line-height:37px">33.33%</div>
<svg class="abs" style="left:0;top:0" width="1908" height="1161"><g transform="translate(0,0.00)"><path d="M656.6 884.6 H654.3 Q652.6 884.6 652.6 886.3 V890.8 Q652.6 892.5 654.3 892.5 H659.8 Q661.5 892.5 661.5 890.8 V888.7" fill="none" stroke="#b3b3b3" stroke-width="1.3"/><path d="M657.6 888.9 L662.2 884.3" stroke="#999" stroke-width="1.5" stroke-linecap="round"/><path d="M659.9 883.2 H663.7 V887 Z" fill="#999"/></g><g transform="translate(0,38.00)"><path d="M656.6 884.6 H654.3 Q652.6 884.6 652.6 886.3 V890.8 Q652.6 892.5 654.3 892.5 H659.8 Q661.5 892.5 661.5 890.8 V888.7" fill="none" stroke="#b3b3b3" stroke-width="1.3"/><path d="M657.6 888.9 L662.2 884.3" stroke="#999" stroke-width="1.5" stroke-linecap="round"/><path d="M659.9 883.2 H663.7 V887 Z" fill="#999"/></g><g transform="translate(0,112.00)"><path d="M656.6 884.6 H654.3 Q652.6 884.6 652.6 886.3 V890.8 Q652.6 892.5 654.3 892.5 H659.8 Q661.5 892.5 661.5 890.8 V888.7" fill="none" stroke="#b3b3b3" stroke-width="1.3"/><path d="M657.6 888.9 L662.2 884.3" stroke="#999" stroke-width="1.5" stroke-linecap="round"/><path d="M659.9 883.2 H663.7 V887 Z" fill="#999"/></g><g transform="translate(0,149.00)"><path d="M656.6 884.6 H654.3 Q652.6 884.6 652.6 886.3 V890.8 Q652.6 892.5 654.3 892.5 H659.8 Q661.5 892.5 661.5 890.8 V888.7" fill="none" stroke="#b3b3b3" stroke-width="1.3"/><path d="M657.6 888.9 L662.2 884.3" stroke="#999" stroke-width="1.5" stroke-linecap="round"/><path d="M659.9 883.2 H663.7 V887 Z" fill="#999"/></g><g transform="translate(0,186.00)"><path d="M656.6 884.6 H654.3 Q652.6 884.6 652.6 886.3 V890.8 Q652.6 892.5 654.3 892.5 H659.8 Q661.5 892.5 661.5 890.8 V888.7" fill="none" stroke="#b3b3b3" stroke-width="1.3"/><path d="M657.6 888.9 L662.2 884.3" stroke="#999" stroke-width="1.5" stroke-linecap="round"/><path d="M659.9 883.2 H663.7 V887 Z" fill="#999"/></g><g transform="translate(0,223.50)"><path d="M656.6 884.6 H654.3 Q652.6 884.6 652.6 886.3 V890.8 Q652.6 892.5 654.3 892.5 H659.8 Q661.5 892.5 661.5 890.8 V888.7" fill="none" stroke="#b3b3b3" stroke-width="1.3"/><path d="M657.6 888.9 L662.2 884.3" stroke="#999" stroke-width="1.5" stroke-linecap="round"/><path d="M659.9 883.2 H663.7 V887 Z" fill="#999"/></g><g transform="translate(0,261.00)"><path d="M656.6 884.6 H654.3 Q652.6 884.6 652.6 886.3 V890.8 Q652.6 892.5 654.3 892.5 H659.8 Q661.5 892.5 661.5 890.8 V888.7" fill="none" stroke="#b3b3b3" stroke-width="1.3"/><path d="M657.6 888.9 L662.2 884.3" stroke="#999" stroke-width="1.5" stroke-linecap="round"/><path d="M659.9 883.2 H663.7 V887 Z" fill="#999"/></g></svg>
<div id="scroll" class="abs"></div>
</body></html>
